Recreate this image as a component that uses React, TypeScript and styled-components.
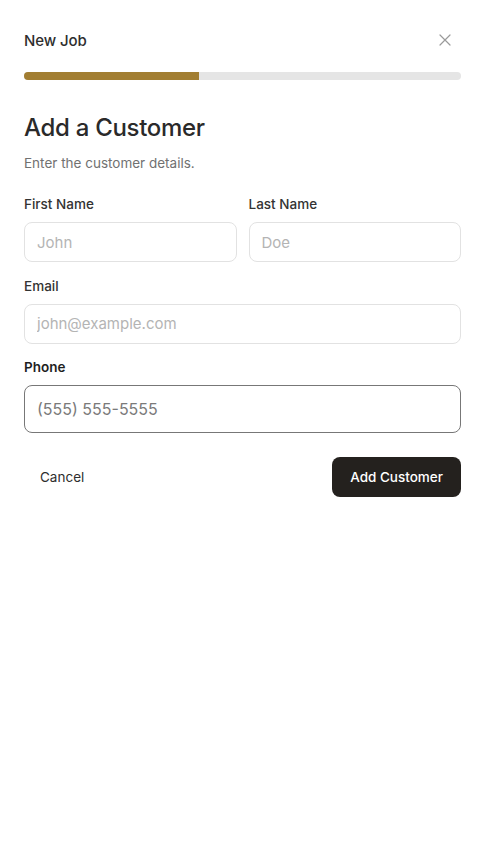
import React, { useState } from 'react';
import styled, { createGlobalStyle } from 'styled-components';

const GlobalStyle = createGlobalStyle`
  html, body {
    margin: 0;
    padding: 0;
    background: #ffffff;
  }
  body {
    font-family: Inter, 'Open Sans', 'Liberation Sans', sans-serif;
    color: #2b2b2b;
  }
  * {
    box-sizing: border-box;
  }
`;

const Panel = styled.div`
  width: 485px;
  padding: 24px;
`;

const Header = styled.div`
  align-items: center;
  display: flex;
  height: 32px;
  justify-content: space-between;
`;

const HeaderTitle = styled.span`
  color: #2e2e2e;
  font-size: 15px;
  font-weight: 500;
  letter-spacing: -0.1px;
`;

const CloseButton = styled.button`
  align-items: center;
  background: none;
  border: none;
  color: #9a9a9a;
  cursor: pointer;
  display: flex;
  height: 24px;
  justify-content: center;
  margin-right: 4px;
  padding: 0;
  width: 24px;
`;

const Track = styled.div`
  background: #e5e5e5;
  border-radius: 4px;
  height: 8px;
  margin-top: 16px;
  overflow: hidden;
  width: 100%;
`;

const Fill = styled.div`
  background: #a27e32;
  height: 100%;
`;

const Heading = styled.h1`
  color: #2a2a2a;
  font-size: 24px;
  font-weight: 500;
  letter-spacing: -0.3px;
  line-height: 32px;
  margin: 32px 0 0;
`;

const Subtitle = styled.p`
  color: #717171;
  font-size: 13.5px;
  line-height: 20px;
  margin: 9px 0 0;
`;

const Form = styled.form`
  display: flex;
  flex-direction: column;
  gap: 14.5px;
  margin-top: 22px;
`;

const Row = styled.div`
  display: grid;
  gap: 12px;
  grid-template-columns: 1fr 1fr;
`;

const Field = styled.label`
  display: flex;
  flex-direction: column;
  gap: 9px;
`;

const Label = styled.span<{ $active?: boolean }>`
  color: ${(p) => (p.$active ? '#1f1f1f' : '#333333')};
  font-size: 13.5px;
  font-weight: ${(p) => (p.$active ? 600 : 500)};
  line-height: 18px;
`;

const Input = styled.input<{ $active?: boolean }>`
  background: #ffffff;
  border: 1px solid ${(p) => (p.$active ? '#777777' : '#e2e2e2')};
  border-radius: 8px;
  color: #2b2b2b;
  font-family: inherit;
  font-size: ${(p) => (p.$active ? '16px' : '15px')};
  height: ${(p) => (p.$active ? '48px' : '40px')};
  outline: none;
  padding: 0 12px;
  width: 100%;
  &::placeholder {
    color: ${(p) => (p.$active ? '#7a7a7a' : '#b4b4b4')};
  }
`;

const Actions = styled.div`
  align-items: center;
  display: flex;
  justify-content: space-between;
  margin-top: 9px;
`;

const GhostButton = styled.button`
  background: none;
  border: none;
  border-radius: 8px;
  color: #2e2e2e;
  cursor: pointer;
  font-family: inherit;
  font-size: 13.5px;
  font-weight: 400;
  height: 40px;
  padding: 0 16px;
`;

const PrimaryButton = styled.button`
  background: #24211e;
  border: none;
  border-radius: 8px;
  color: #ffffff;
  cursor: pointer;
  font-family: inherit;
  font-size: 13.5px;
  font-weight: 500;
  height: 40px;
  padding: 0 18px;
`;

const App: React.FC = () => {
  const [step] = useState(2);
  const totalSteps = 5;

  return (
    <>
      <GlobalStyle />
      <Panel>
        <Header>
          <HeaderTitle>New Job</HeaderTitle>
          <CloseButton aria-label="Close">
            <svg width="12" height="12" viewBox="0 0 12 12" fill="none">
              <path
                d="M1 1L11 11M11 1L1 11"
                stroke="currentColor"
                strokeWidth="1.2"
                strokeLinecap="round"
              />
            </svg>
          </CloseButton>
        </Header>
        <Track>
          <Fill style={{ width: `${(step / totalSteps) * 100}%` }} />
        </Track>
        <Heading>Add a Customer</Heading>
        <Subtitle>Enter the customer details.</Subtitle>
        <Form onSubmit={(e) => e.preventDefault()}>
          <Row>
            <Field>
              <Label>First Name</Label>
              <Input placeholder="John" />
            </Field>
            <Field>
              <Label>Last Name</Label>
              <Input placeholder="Doe" />
            </Field>
          </Row>
          <Field>
            <Label>Email</Label>
            <Input placeholder="john@example.com" />
          </Field>
          <Field>
            <Label $active>Phone</Label>
            <Input $active placeholder="(555) 555-5555" />
          </Field>
          <Actions>
            <GhostButton type="button">Cancel</GhostButton>
            <PrimaryButton type="submit">Add Customer</PrimaryButton>
          </Actions>
        </Form>
      </Panel>
    </>
  );
};

export default App;
